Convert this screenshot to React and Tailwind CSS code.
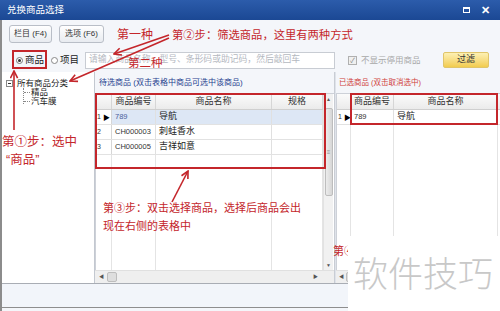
import React from "react";

const RED = "#c4262b";

function Header({ cells }) {
  return (
    <div className="flex h-[16px] shrink-0 bg-gradient-to-b from-[#fbfbfb] to-[#ebebeb] border-b border-[#cfcfcf]">
      {cells.map(([w, label], i) => (
        <div
          key={i}
          className={`${w} shrink-0 border-r border-[#d6d6d6] flex items-center justify-center text-[9px] text-[#333]`}
        >
          {label}
        </div>
      ))}
    </div>
  );
}

function Row({ widths, num, code, name, selected, triangle }) {
  return (
    <div className="flex h-[15px] shrink-0 border-b border-[#e2e2e2]">
      <div className={`${widths[0]} shrink-0 border-r border-[#d6d6d6] flex items-center pl-[1px] text-[7px] text-[#333]`}>
        {num}
        {triangle && <span className="ml-[2px] text-[7px] leading-none text-black">▶</span>}
      </div>
      <div className={`${widths[1]} shrink-0 border-r border-[#e0e0e0] flex items-center pl-[3px] text-[7.5px] ${selected ? "bg-[#dde7f5] text-[#4a5e9c]" : "text-[#333]"}`}>
        {code}
      </div>
      <div className={`${widths[2]} shrink-0 border-r border-[#e0e0e0] flex items-center pl-[3px] text-[9px] text-[#222] ${selected ? "bg-[#dde7f5]" : ""}`}>
        {name}
      </div>
      {widths[3] && (
        <div className={`${widths[3]} shrink-0 border-r border-[#e0e0e0] ${selected ? "bg-[#dde7f5]" : ""}`} />
      )}
    </div>
  );
}

function Filler({ widths }) {
  return (
    <div className="flex flex-1">
      {widths.map((w, i) => (
        <div key={i} className={`${w} shrink-0 border-r border-[#e4e4e4]`} />
      ))}
    </div>
  );
}

export default function App() {
  const mid = ["w-[16px]", "w-[44px]", "w-[116px]", "w-[51px]"];
  const right = ["w-[14px]", "w-[43px]", "w-[104px]"];

  return (
    <div className="relative w-[500px] h-[311px] overflow-hidden bg-white font-['Liberation_Sans','Noto_Sans_CJK_SC',sans-serif]">
      {/* title bar */}
      <div className="h-[20px] flex items-center justify-between bg-gradient-to-b from-[#2c5cab] to-[#1b4894] pl-[7px] pr-[10px]">
        <span className="text-[9.5px] text-white">兑换商品选择</span>
        <div className="flex items-center gap-[11px]">
          <span className="block w-[7px] h-[6px] border border-white border-t-2" />
          <span className="text-[11px] font-bold text-white leading-none">✕</span>
        </div>
      </div>

      <div className="flex flex-col h-[291px] border-l-2 border-[#8c8c8c] bg-[#f4f6fa]">
        {/* toolbar */}
        <div className="h-[28px] flex items-center gap-[7px] pl-[7px]">
          <button className="h-[18px] w-[43px] rounded-[3px] border border-[#b9bec7] bg-gradient-to-b from-white to-[#e8ebf0] text-[8px] text-[#333]">
            栏目 (F4)
          </button>
          <button className="h-[18px] w-[45px] rounded-[3px] border border-[#b9bec7] bg-gradient-to-b from-white to-[#e8ebf0] text-[8px] text-[#333]">
            选项 (F6)
          </button>
        </div>

        {/* filter row */}
        <div className="h-[24px] flex items-center pl-[14px]">
          <div className="flex items-center gap-[2px] w-[34px]">
            <span className="w-[7px] h-[7px] rounded-full border border-[#777] bg-white flex items-center justify-center">
              <span className="w-[3px] h-[3px] rounded-full bg-[#333]" />
            </span>
            <span className="text-[9.5px] text-[#222]">商品</span>
          </div>
          <div className="flex items-center gap-[2px] ml-[1px] w-[34px]">
            <span className="w-[7px] h-[7px] rounded-full border border-[#888] bg-white" />
            <span className="text-[9.5px] text-[#222]">项目</span>
          </div>
          <div className="w-[250px] h-[17px] border border-[#c8ccd3] bg-white flex items-center pl-[3px] text-[8.8px] text-[#b4b8bf] whitespace-nowrap overflow-hidden">
            请输入商品名称、型号、条形码或助记码，然后敲回车
          </div>
          <div className="flex items-center gap-[4px] ml-[13px]">
            <span className="w-[9px] h-[9px] border border-[#b0b0b0] bg-[#f0f0f0] flex items-center justify-center text-[7px] text-[#888] leading-none">✓</span>
            <span className="text-[8.5px] text-[#a8a8a8]">不显示停用商品</span>
          </div>
          <button className="ml-auto mr-[11px] h-[16px] w-[46px] rounded-[2px] border border-[#e0c56a] bg-gradient-to-b from-[#fdf0b2] to-[#f2cc4c] text-[9px] text-[#333]">
            过滤
          </button>
        </div>

        {/* main area */}
        <div className="h-[211px] flex">
          {/* left tree */}
          <div className="w-[93px] bg-white border-r border-[#c3c8d0] pt-[6px] pl-[4px] text-[8.5px] text-[#222]">
            <div className="flex items-center h-[10px]">
              <span className="w-[7px] h-[7px] border border-[#888] flex items-center justify-center text-[7px] leading-none">
                <span className="block w-[3px] h-px bg-[#333]" />
              </span>
              <span className="ml-[4px]">所有商品分类</span>
            </div>
            <div className="ml-[17px] border-l border-dotted border-[#888] h-[16px] flex flex-col">
              <div className="flex items-center h-[9px]">
                <span className="w-[6px] border-t border-dotted border-[#888]" />
                <span className="ml-[1px]">精品</span>
              </div>
              <div className="flex items-center h-[9px]">
                <span className="w-[6px] border-t border-dotted border-[#888]" />
                <span className="ml-[1px]">汽车膜</span>
              </div>
            </div>
          </div>

          {/* middle grid */}
          <div className="w-[239px] flex flex-col">
            <div className="h-[21px] flex items-center pl-[4px] text-[8px] text-[#1f3f8f] whitespace-nowrap">
              待选商品 (双击表格中商品可选中该商品)
            </div>
            <div className="flex-1 flex border-t border-l border-[#cdd1d8] bg-white">
              <div className="w-[227px] flex flex-col">
                <Header cells={[[mid[0], ""], [mid[1], "商品编号"], [mid[2], "商品名称"], [mid[3], "规格"]]} />
                <Row widths={mid} num="1" code="789" name="导航" selected triangle />
                <Row widths={mid} num="2" code="CH000003" name="刺蛙香水" />
                <Row widths={mid} num="3" code="CH000005" name="吉祥如意" />
                <Filler widths={mid} />
              </div>
              <div className="w-[10px] bg-[#f1f1f1] border-l border-[#e2e2e2] flex flex-col items-center">
                <span className="text-[5px] text-[#555] mt-[3px] leading-none">▲</span>
                <div className="mt-[6px] w-[8px] h-[88px] rounded-[2px] border border-[#bdbdbd] bg-gradient-to-r from-[#ececec] to-[#d6d6d6] flex items-center justify-center">
                  <span className="text-[6px] text-[#888] leading-none">≡</span>
                </div>
                <span className="mt-auto mb-[2px] text-[5px] text-[#555] leading-none">▼</span>
              </div>
            </div>
            <div className="h-[13px] flex items-center bg-[#efefef] border-t border-[#e0e0e0]">
              <span className="ml-[4px] text-[5px] text-[#555]">◀</span>
              <span className="ml-[3px] w-[10px] h-[10px] rounded-[2px] border border-[#bdbdbd] bg-[#dedede]" />
              <span className="ml-auto mr-[16px] text-[5px] text-[#555]">▶</span>
            </div>
          </div>

          <div className="w-[2px] bg-[#dfe3ea] border-l border-[#c9cdd4]" />

          {/* right grid */}
          <div className="flex-1 flex flex-col">
            <div className="h-[21px] flex items-center pl-[3px] text-[7.5px] text-[#d0403a] whitespace-nowrap">
              已选商品 (双击取消选中)
            </div>
            <div className="flex-1 flex flex-col border-t border-l border-[#cdd1d8] bg-white">
              <Header cells={[[right[0], ""], [right[1], "商品编号"], [right[2], "商品名称"]]} />
              <Row widths={right} num="1" code="789" name="导航" triangle />
              <Filler widths={right} />
            </div>
            <div className="h-[13px] flex items-center bg-[#efefef] border-t border-[#e0e0e0]">
              <span className="ml-[3px] text-[5px] text-[#555]">◀</span>
              <span className="ml-[2px] w-[10px] h-[10px] rounded-[2px] border border-[#bdbdbd] bg-[#dedede]" />
            </div>
          </div>
        </div>

        {/* footer */}
        <div className="h-[25px] bg-[#f2f5fa] border-t border-[#a9adb4] border-b border-b-[#8e8e8e]" />
      </div>

      {/* annotation boxes */}
      <div className="absolute left-[12px] top-[50px] w-[35px] h-[19px] border-2 border-[#c4262b]" />
      <div className="absolute left-[95px] top-[93px] w-[231px] h-[76px] border-2 border-[#c4262b]" />
      <div className="absolute left-[350px] top-[93px] w-[148px] h-[32px] border-2 border-[#c4262b]" />

      {/* annotation arrows */}
      <svg className="absolute inset-0 pointer-events-none" width="500" height="311">
        <defs>
          <marker id="ah" viewBox="0 0 10 10" refX="9" refY="5" markerWidth="9" markerHeight="9" markerUnits="userSpaceOnUse" orient="auto">
            <path d="M1,1 L9,5 L1,9" fill="none" stroke={RED} strokeWidth="1.8" />
          </marker>
        </defs>
        <line x1="169" y1="35" x2="114" y2="54" stroke={RED} strokeWidth="1.6" markerEnd="url(#ah)" />
        <line x1="169" y1="38" x2="70" y2="81" stroke={RED} strokeWidth="1.6" markerEnd="url(#ah)" />
        <line x1="14" y1="130" x2="14" y2="71" stroke={RED} strokeWidth="1.6" markerEnd="url(#ah)" />
        <line x1="172" y1="202" x2="188" y2="171" stroke={RED} strokeWidth="1.6" markerEnd="url(#ah)" />
      </svg>

      {/* annotation texts */}
      <div className="absolute left-[117px] top-[29px] text-[12px] leading-none text-[#c4262b]">第一种</div>
      <div className="absolute left-[172px] top-[30px] text-[11.3px] leading-none text-[#c4262b] whitespace-nowrap">第②步：筛选商品，这里有两种方式</div>
      <div className="absolute left-[128px] top-[58px] text-[11.5px] leading-none text-[#c4262b]">第二种</div>
      <div className="absolute left-[2px] top-[133px] text-[12.5px] leading-[18px] text-[#c4262b] whitespace-nowrap">
        <div>第①步：选中</div>
        <div className="pl-[4px]">“商品”</div>
      </div>
      <div className="absolute left-[103px] top-[199px] text-[11px] leading-[18px] text-[#c4262b] whitespace-nowrap">
        <div>第③步：双击选择商品，选择后商品会出</div>
        <div>现在右侧的表格中</div>
      </div>
      <div className="absolute left-[333px] top-[246px] text-[11px] leading-none text-[#c4262b] whitespace-nowrap">第④步</div>

      {/* watermark */}
      <div className="absolute left-[348px] top-[236px] w-[152px] h-[75px] bg-white">
        <div className="mt-[18px] ml-[5px] text-[35px] leading-none text-[#c8c8c8] font-['Noto_Sans_CJK_SC',sans-serif] font-light whitespace-nowrap">
          软件技巧
        </div>
      </div>
    </div>
  );
}
